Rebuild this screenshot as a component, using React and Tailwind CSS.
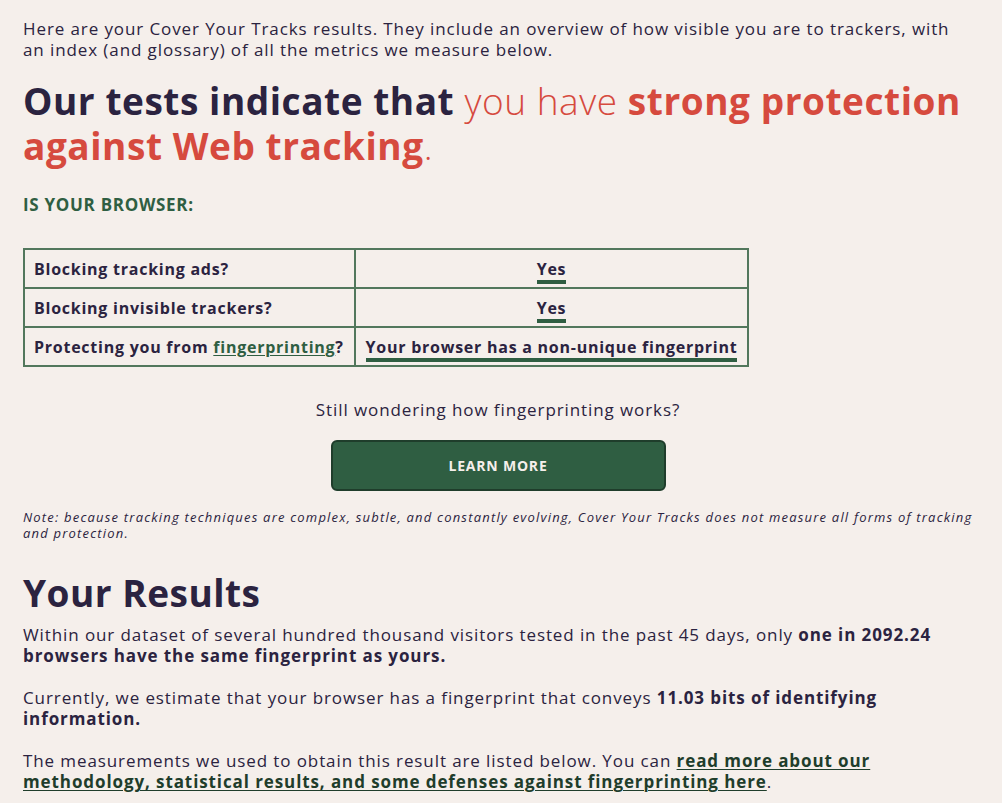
export default function App() {
  const font = { fontFamily: '"Open Sans", "Liberation Sans", sans-serif' };
  return (
    <div className="min-h-screen bg-[#f5efeb] text-[#2b2340]" style={font}>
      <div className="w-[973px] pl-[23px] pt-[18px]">
        <p className="text-[17px] leading-[21px] tracking-[0.9px]">
          Here are your Cover Your Tracks results. They include an overview of how visible you are to trackers, with an
          index (and glossary) of all the metrics we measure below.
        </p>

        <h1 className="mt-[18px] text-[37px] font-bold leading-[45px] tracking-[0.55px]">
          Our tests indicate that{' '}
          <span className="font-light text-[#d64a3e]">you have </span>
          <span className="text-[#d64a3e]">strong protection against Web tracking</span>
          <span className="font-light text-[#d64a3e]">.</span>
        </h1>

        <h2 className="mt-[26px] text-[17px] font-bold uppercase leading-[21px] tracking-[0.7px] text-[#2f5e42]">
          Is your browser:
        </h2>

        <table className="mt-[33px] w-[726px] table-fixed border-collapse border-2 border-[#52775c] text-[16px] font-bold tracking-[0.75px]">
          <colgroup>
            <col className="w-[331px]" />
            <col />
          </colgroup>
          <tbody>
            <tr className="h-[39px]">
              <td className="border-2 border-[#52775c] px-[9px]">Blocking tracking ads?</td>
              <td className="border-2 border-[#52775c] px-[8px] text-center">
                <span className="border-b-4 border-[#2f5e42]">Yes</span>
              </td>
            </tr>
            <tr className="h-[39px]">
              <td className="border-2 border-[#52775c] px-[9px]">Blocking invisible trackers?</td>
              <td className="border-2 border-[#52775c] px-[8px] text-center">
                <span className="border-b-4 border-[#2f5e42]">Yes</span>
              </td>
            </tr>
            <tr className="h-[39px]">
              <td className="whitespace-nowrap border-2 border-[#52775c] px-[9px]">
                Protecting you from{' '}
                <span className="text-[#2f5e42] underline decoration-1 underline-offset-2">fingerprinting</span>?
              </td>
              <td className="whitespace-nowrap border-2 border-[#52775c] px-[8px] text-center">
                <span className="border-b-4 border-[#2f5e42]">Your browser has a non-unique fingerprint</span>
              </td>
            </tr>
          </tbody>
        </table>

        <div className="flex flex-col items-center">
          <p className="mt-[32px] text-[17px] leading-[21px] tracking-[0.9px]">Still wondering how fingerprinting works?</p>
          <button
            type="button"
            className="mt-[20px] h-[51px] w-[335px] rounded-[6px] border-2 border-[#1f3d2b] bg-[#2f5e42] text-[14px] font-bold tracking-[0.8px] text-[#f5efeb]"
          >
            LEARN MORE
          </button>
        </div>

        <p className="mt-[18px] text-[13px] italic leading-[16px] tracking-[1.2px]">
          Note: because tracking techniques are complex, subtle, and constantly evolving, Cover Your Tracks does not measure
          all forms of tracking and protection.
        </p>

        <h2 className="mt-[29px] text-[37px] font-bold leading-[45px] tracking-[0.5px]">Your Results</h2>

        <p className="mt-[9px] text-[17px] leading-[21px] tracking-[0.9px]">
          Within our dataset of several hundred thousand visitors tested in the past 45 days, only{' '}
          <b>one in 2092.24 browsers have the same fingerprint as yours.</b>
        </p>
        <p className="mt-[21px] text-[17px] leading-[21px] tracking-[0.9px]">
          Currently, we estimate that your browser has a fingerprint that conveys{' '}
          <b>11.03 bits of identifying information.</b>
        </p>
        <p className="mt-[21px] text-[17px] leading-[21px] tracking-[0.9px]">
          The measurements we used to obtain this result are listed below. You can{' '}
          <a href="#" className="font-bold text-[#1f3d2b] underline decoration-1 underline-offset-2">
            read more about our methodology, statistical results, and some defenses against fingerprinting here
          </a>
          .
        </p>
      </div>
    </div>
  );
}
